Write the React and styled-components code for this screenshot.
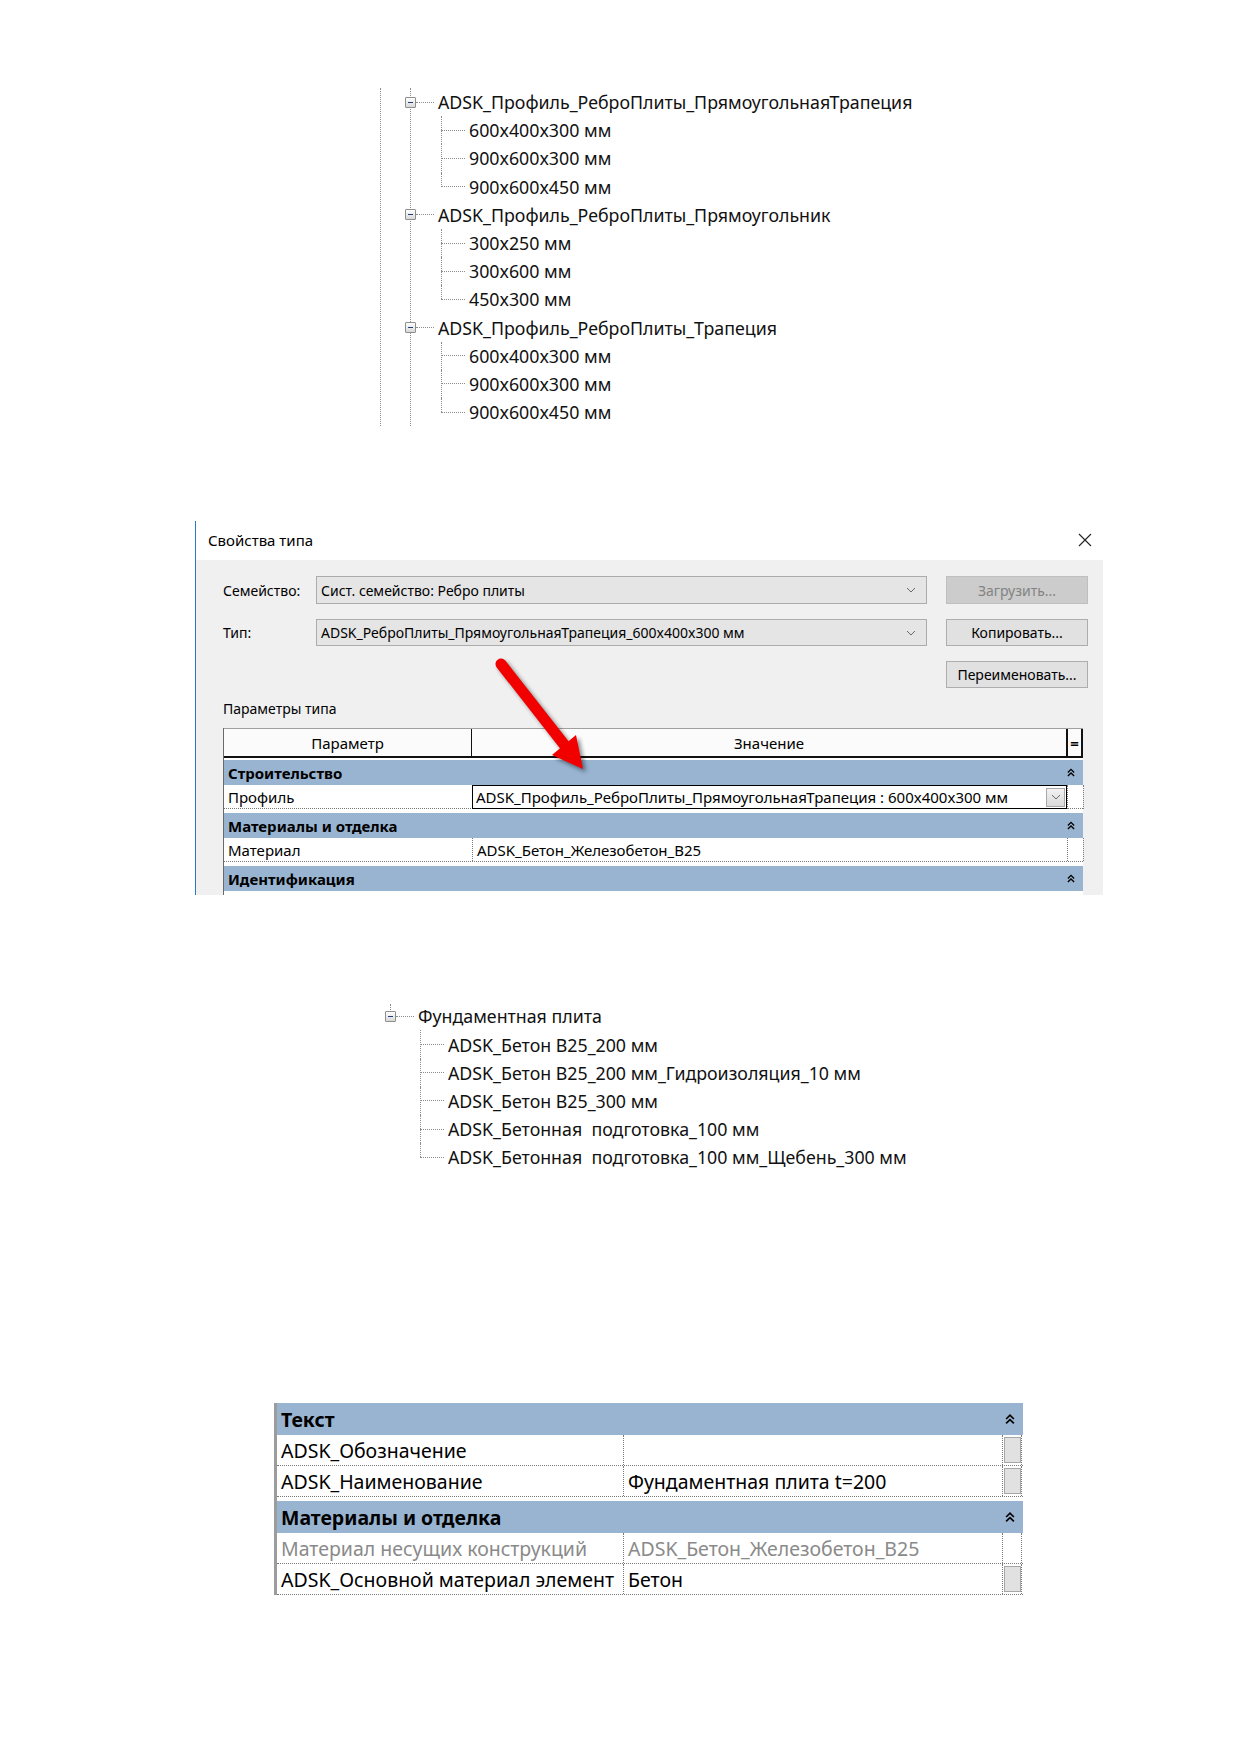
import React from 'react'
import styled, {createGlobalStyle} from 'styled-components'

const GlobalStyle = createGlobalStyle`
  body {
    margin: 0;
    background: #fff;
  }
  * {
    box-sizing: border-box;
  }
`

const profileTree = [
  {
    name: 'ADSK_Профиль_РеброПлиты_ПрямоугольнаяТрапеция',
    items: ['600x400x300 мм', '900x600x300 мм', '900x600x450 мм'],
  },
  {
    name: 'ADSK_Профиль_РеброПлиты_Прямоугольник',
    items: ['300x250 мм', '300x600 мм', '450x300 мм'],
  },
  {
    name: 'ADSK_Профиль_РеброПлиты_Трапеция',
    items: ['600x400x300 мм', '900x600x300 мм', '900x600x450 мм'],
  },
]

const slabTree = [
  {
    name: 'Фундаментная плита',
    items: [
      'ADSK_Бетон B25_200 мм',
      'ADSK_Бетон B25_200 мм_Гидроизоляция_10 мм',
      'ADSK_Бетон B25_300 мм',
      'ADSK_Бетонная  подготовка_100 мм',
      'ADSK_Бетонная  подготовка_100 мм_Щебень_300 мм',
    ],
  },
]

const small = {
  cols: '248px 595px 17px',
  group: 25,
  item: 23,
  font: 15,
  gap: 4,
  icon: [8, 9],
  pad: 8,
}

const large = {
  cols: '346px 379px 20px',
  group: 32,
  item: 30,
  font: 19.5,
  gap: 4,
  icon: [10, 12],
  pad: 8,
}

export default function App() {
  return (
    <Page>
      <GlobalStyle />

      <TreeFrame $outer>
        <Tree nodes={profileTree} trunk />
      </TreeFrame>

      <Dialog>
        <TitleBar>
          <Title>Свойства типа</Title>
          <CloseIcon />
        </TitleBar>
        <DialogBody>
          <FormGrid>
            <FieldLabel>Семейство:</FieldLabel>
            <Combo>
              <span>Сист. семейство: Ребро плиты</span>
              <ComboChevron />
            </Combo>
            <DialogButton disabled>Загрузить...</DialogButton>

            <FieldLabel>Тип:</FieldLabel>
            <Combo>
              <span>ADSK_РеброПлиты_ПрямоугольнаяТрапеция_600x400x300 мм</span>
              <ComboChevron />
            </Combo>
            <DialogButton>Копировать...</DialogButton>

            <span />
            <span />
            <DialogButton>Переименовать...</DialogButton>
          </FormGrid>

          <SectionLabel>Параметры типа</SectionLabel>

          <PropTable>
            <HeaderRow>
              <HeaderCell>Параметр</HeaderCell>
              <HeaderCell>Значение</HeaderCell>
              <HeaderCell $eq>=</HeaderCell>
            </HeaderRow>
            <GroupRow $s={small}>
              <span>Строительство</span>
              <Collapse s={small} />
            </GroupRow>
            <ItemRow $s={small}>
              <NameCell>Профиль</NameCell>
              <EditorCell>
                <span>ADSK_Профиль_РеброПлиты_ПрямоугольнаяТрапеция : 600x400x300 мм</span>
                <DropButton>
                  <ComboChevron />
                </DropButton>
              </EditorCell>
              <ExtraCell />
            </ItemRow>
            <GroupRow $s={small} $gap>
              <span>Материалы и отделка</span>
              <Collapse s={small} />
            </GroupRow>
            <ItemRow $s={small}>
              <NameCell>Материал</NameCell>
              <ValueCell>ADSK_Бетон_Железобетон_B25</ValueCell>
              <ExtraCell />
            </ItemRow>
            <GroupRow $s={small} $gap>
              <span>Идентификация</span>
              <Collapse s={small} />
            </GroupRow>
          </PropTable>
        </DialogBody>

        <Arrow />
      </Dialog>

      <TreeFrame $slab>
        <Tree nodes={slabTree} stub />
      </TreeFrame>

      <BigTable>
        <GroupRow $s={large}>
          <span>Текст</span>
          <Collapse s={large} />
        </GroupRow>
        <ItemRow $s={large}>
          <NameCell>ADSK_Обозначение</NameCell>
          <ValueCell />
          <ExtraCell>
            <SquareButton />
          </ExtraCell>
        </ItemRow>
        <ItemRow $s={large}>
          <NameCell>ADSK_Наименование</NameCell>
          <ValueCell>Фундаментная плита t=200</ValueCell>
          <ExtraCell>
            <SquareButton />
          </ExtraCell>
        </ItemRow>
        <GroupRow $s={large} $gap>
          <span>Материалы и отделка</span>
          <Collapse s={large} />
        </GroupRow>
        <ItemRow $s={large}>
          <NameCell $muted>Материал несущих конструкций</NameCell>
          <ValueCell $muted>ADSK_Бетон_Железобетон_B25</ValueCell>
          <ExtraCell />
        </ItemRow>
        <ItemRow $s={large}>
          <NameCell>ADSK_Основной материал элемент</NameCell>
          <ValueCell>Бетон</ValueCell>
          <ExtraCell>
            <SquareButton />
          </ExtraCell>
        </ItemRow>
      </BigTable>
    </Page>
  )
}

function Tree({nodes, trunk, stub}) {
  return (
    <Trunk $line={trunk}>
      {nodes.map(node => (
        <div key={node.name}>
          <NodeRow $stub={stub}>
            <Expander $shift={trunk ? -6 : -5} />
            <HLine $w={18} />
            <NodeLabel>{node.name}</NodeLabel>
          </NodeRow>
          <ChildList>
            {node.items.map((item, i) => (
              <ChildRow key={item + i} $last={i === node.items.length - 1}>
                <HLine $w={24} />
                <NodeLabel>{item}</NodeLabel>
              </ChildRow>
            ))}
          </ChildList>
        </div>
      ))}
    </Trunk>
  )
}

function CloseIcon() {
  return (
    <svg width="14" height="14" viewBox="0 0 14 14">
      <path d="M1 1 L13 13 M13 1 L1 13" stroke="#222" strokeWidth="1.1" />
    </svg>
  )
}

function ComboChevron() {
  return (
    <svg width="10" height="6" viewBox="0 0 10 6">
      <polyline points="1,1 5,5 9,1" fill="none" stroke="#6a6a6a" strokeWidth="1" />
    </svg>
  )
}

// double chevron that folds a property group
function Collapse({s}) {
  const [w, h] = s.icon
  return (
    <svg width={w} height={h} viewBox="0 0 9 10">
      <polyline points="1,5 4.5,1.5 8,5" fill="none" stroke="#000" strokeWidth="1.5" />
      <polyline points="1,9 4.5,5.5 8,9" fill="none" stroke="#000" strokeWidth="1.5" />
    </svg>
  )
}

function Arrow() {
  return (
    <ArrowLayer width="908" height="374" viewBox="0 0 908 374">
      <defs>
        <filter id="arrowShadow" x="-20%" y="-20%" width="140%" height="140%">
          <feGaussianBlur stdDeviation="2" />
        </filter>
      </defs>
      <g transform="translate(3 3)" filter="url(#arrowShadow)" opacity="0.45">
        <line x1="305" y1="143" x2="370" y2="226" stroke="#000" strokeWidth="11" strokeLinecap="round" />
        <polygon points="387,248 356,234 380,214" fill="#000" />
      </g>
      <line x1="305" y1="143" x2="370" y2="226" stroke="#f20000" strokeWidth="11" strokeLinecap="round" />
      <polygon points="387,248 356,234 380,214" fill="#f20000" />
    </ArrowLayer>
  )
}

const Page = styled.div`
  width: 1239px;
  min-height: 1752px;
  padding-top: 88px;
  font-family: 'Noto Sans', 'Liberation Sans', sans-serif;
  color: #000;
`

/* tree views */

const TreeFrame = styled.div`
  width: 600px;
  margin-left: ${p => (p.$outer ? 380 : 390)}px;
  margin-top: ${p => (p.$slab ? 107 : 0)}px;
  border-left: ${p => (p.$outer ? '1px dotted #8c8c8c' : 'none')};
  padding-left: ${p => (p.$outer ? 29 : 0)}px;
`

const Trunk = styled.div`
  border-left: ${p => (p.$line ? '1px dotted #8c8c8c' : 'none')};
`

const NodeRow = styled.div`
  position: relative;
  display: flex;
  align-items: center;
  height: 28.2px;

  &::before {
    content: '';
    display: ${p => (p.$stub ? 'block' : 'none')};
    position: absolute;
    left: 0;
    top: 2px;
    height: 6px;
    border-left: 1px dotted #8c8c8c;
  }
`

const Expander = styled.span`
  position: relative;
  flex: 0 0 11px;
  height: 11px;
  margin-left: ${p => p.$shift}px;
  border: 1px solid #8e8e8e;
  border-radius: 1px;
  background: linear-gradient(#ffffff, #d8d8d8);

  &::after {
    content: '';
    position: absolute;
    left: 2px;
    top: 4px;
    width: 5px;
    height: 1px;
    background: #1f3f7a;
  }
`

const HLine = styled.span`
  flex: 0 0 ${p => p.$w}px;
  border-top: 1px dotted #8c8c8c;
`

const NodeLabel = styled.span`
  margin-left: 4px;
  font-size: 17.8px;
  white-space: pre;
  color: #111;
`

const ChildList = styled.div`
  margin-left: 30px;
`

const ChildRow = styled.div`
  position: relative;
  display: flex;
  align-items: center;
  height: 28.2px;

  &::before {
    content: '';
    position: absolute;
    left: 0;
    top: 0;
    bottom: ${p => (p.$last ? '50%' : '0')};
    border-left: 1px dotted #8c8c8c;
  }
`

/* type properties dialog */

const Dialog = styled.div`
  position: relative;
  width: 908px;
  height: 374px;
  margin: 95px 0 0 195px;
  border-left: 1px solid #2b78c5;
  overflow: hidden;
  font-size: 14px;
`

const TitleBar = styled.div`
  display: flex;
  align-items: center;
  justify-content: space-between;
  height: 39px;
  padding: 0 11px 2px 12px;
  background: #fff;
`

const Title = styled.span`
  font-size: 15px;
`

const DialogBody = styled.div`
  height: 335px;
  padding: 16px 15px 0 27px;
  background: #f0f0f0;
`

const FormGrid = styled.div`
  display: grid;
  grid-template-columns: 74px 611px 142px;
  grid-template-rows: 28px 27px 27px;
  column-gap: 19px;
  row-gap: 15px;
`

const FieldLabel = styled.span`
  align-self: center;
  white-space: nowrap;
`

const Combo = styled.div`
  display: flex;
  align-items: center;
  justify-content: space-between;
  padding: 0 10px 0 4px;
  background: #e5e5e5;
  border: 1px solid #acacac;
  white-space: nowrap;
`

const DialogButton = styled.button`
  font: inherit;
  color: ${p => (p.disabled ? '#838383' : '#000')};
  background: ${p => (p.disabled ? '#cccccc' : '#e1e1e1')};
  border: 1px solid ${p => (p.disabled ? '#bfbfbf' : '#adadad')};
  padding: 0;
`

const SectionLabel = styled.div`
  margin: 13px 0 11px;
  line-height: 16px;
`

const PropTable = styled.div`
  width: 860px;
  height: 200px;
  background: #fff;
  border-left: 1px solid #6a6a6a;
`

const HeaderRow = styled.div`
  display: grid;
  grid-template-columns: 247px 595px 17px;
  height: 30px;
  margin-bottom: 2px;
  border-top: 1px solid #a0a0a0;
  border-bottom: 2px solid #111;
  background: #fbfbfb;
  font-size: 15px;
`

const HeaderCell = styled.div`
  display: flex;
  align-items: center;
  justify-content: center;
  border-left: ${p => (p.$eq ? '2px solid #111' : '1px solid #111')};
  border-right: ${p => (p.$eq ? '2px solid #111' : 'none')};
  font-weight: ${p => (p.$eq ? 700 : 400)};

  &:first-child {
    border-left: none;
  }
`

const GroupRow = styled.div`
  display: flex;
  align-items: center;
  justify-content: space-between;
  height: ${p => p.$s.group}px;
  margin-top: ${p => (p.$gap ? p.$s.gap : 0)}px;
  padding: 0 ${p => p.$s.pad}px 0 4px;
  background: #99b4d1;
  font-size: ${p => p.$s.font}px;
  font-weight: 700;
`

const ItemRow = styled.div`
  display: grid;
  grid-template-columns: ${p => p.$s.cols};
  height: ${p => p.$s.item + 1}px;
  border-bottom: 1px dotted #7a7a7a;
  font-size: ${p => p.$s.font}px;
  background: #fff;
`

const NameCell = styled.div`
  display: flex;
  align-items: center;
  padding-left: 4px;
  white-space: nowrap;
  color: ${p => (p.$muted ? '#8a8a8a' : '#000')};
`

const ValueCell = styled.div`
  display: flex;
  align-items: center;
  padding-left: 4px;
  border-left: 1px dotted #7a7a7a;
  white-space: nowrap;
  color: ${p => (p.$muted ? '#8a8a8a' : '#000')};
`

const EditorCell = styled.div`
  display: flex;
  align-items: center;
  justify-content: space-between;
  padding: 1px 1px 1px 3px;
  border: 1px solid #000;
  white-space: nowrap;
`

const DropButton = styled.span`
  display: flex;
  align-items: center;
  justify-content: center;
  width: 19px;
  height: 19px;
  background: linear-gradient(#f2f2f2, #dadada);
  border: 1px solid #a8a8a8;
`

const ExtraCell = styled.div`
  display: flex;
  align-items: stretch;
  padding: 2px 0 2px 1px;
  border-left: 1px dotted #7a7a7a;
  border-right: 1px dotted #7a7a7a;
`

const SquareButton = styled.span`
  flex: 1;
  background: #e1e1e1;
  border: 1px solid #a7a7a7;
`

const ArrowLayer = styled.svg`
  position: absolute;
  left: 0;
  top: 0;
  pointer-events: none;
`

/* bottom property grid */

const BigTable = styled.div`
  width: 749px;
  margin: 232px 0 0 274px;
  border-left: 3px solid #9c9c9c;
`
